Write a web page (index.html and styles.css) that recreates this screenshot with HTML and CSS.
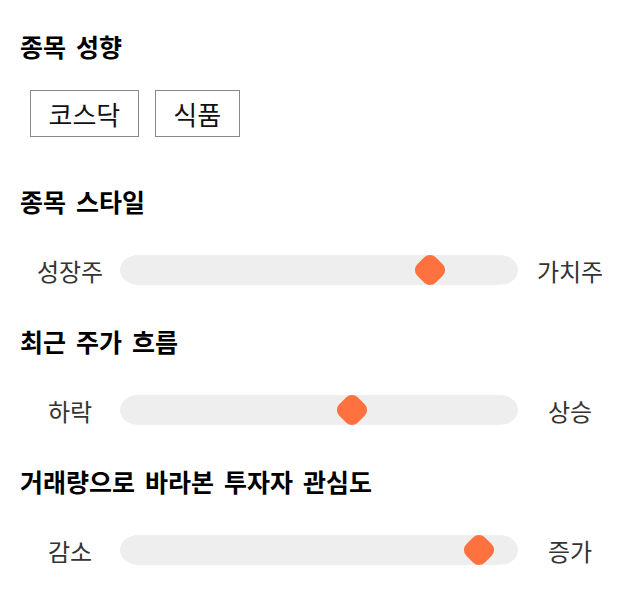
FILE: index.html
```html
<!DOCTYPE html>
<html lang="ko">
<head>
<meta charset="utf-8">
<link rel="stylesheet" href="styles.css">
</head>
<body>
<main class="page">
  <section class="section section--tags">
    <h2 class="heading">종목 성향</h2>
    <div class="tags">
      <span class="tag">코스닥</span>
      <span class="tag">식품</span>
    </div>
  </section>
  <section class="section">
    <h2 class="heading">종목 스타일</h2>
    <div class="scale">
      <span class="scale__label">성장주</span>
      <div class="scale__track"><span class="scale__knob" style="left: 77.9%"></span></div>
      <span class="scale__label">가치주</span>
    </div>
  </section>
  <section class="section">
    <h2 class="heading">최근 주가 흐름</h2>
    <div class="scale">
      <span class="scale__label">하락</span>
      <div class="scale__track"><span class="scale__knob" style="left: 58.3%"></span></div>
      <span class="scale__label">상승</span>
    </div>
  </section>
  <section class="section">
    <h2 class="heading">거래량으로 바라본 투자자 관심도</h2>
    <div class="scale">
      <span class="scale__label">감소</span>
      <div class="scale__track"><span class="scale__knob" style="left: 90.2%"></span></div>
      <span class="scale__label">증가</span>
    </div>
  </section>
</main>
</body>
</html>
```
FILE: styles.css
```css
* { box-sizing: border-box; }
html, body { margin: 0; padding: 0; background: #fff; }
body {
  font-family: "Noto Sans CJK KR", "Noto Sans", sans-serif;
  color: #111;
}
.page {
  padding: 30px 0 0 20px;
  display: flex;
  flex-direction: column;
}
.section { margin-bottom: 40px; }
.section--tags { margin-bottom: 48px; }
.heading {
  margin: 0 0 38px;
  font-size: 25px;
  line-height: 32px;
  font-weight: 700;
  word-spacing: 3px;
  color: #000;
}
.section--tags .heading { margin-bottom: 28px; }
.tags {
  display: flex;
  gap: 16px;
  padding-left: 10px;
}
.tag {
  display: inline-flex;
  align-items: center;
  height: 47px;
  padding: 0 17.5px;
  border: 1px solid #888;
  font-size: 26px;
  color: #111;
}
.scale {
  display: flex;
  align-items: center;
  height: 30px;
  padding-left: 10px;
}
.scale__label {
  width: 80px;
  text-align: center;
  font-size: 24px;
  color: #333;
}
.scale__track {
  position: relative;
  width: 398px;
  height: 30px;
  margin: 0 12px 0 10px;
  background: #eeeeee;
  border-radius: 18px / 15px;
}
.scale__knob {
  position: absolute;
  top: 50%;
  width: 26px;
  height: 26px;
  background: #ff7240;
  border-radius: 8px;
  transform: translate(-50%, -50%) rotate(45deg);
}
```
